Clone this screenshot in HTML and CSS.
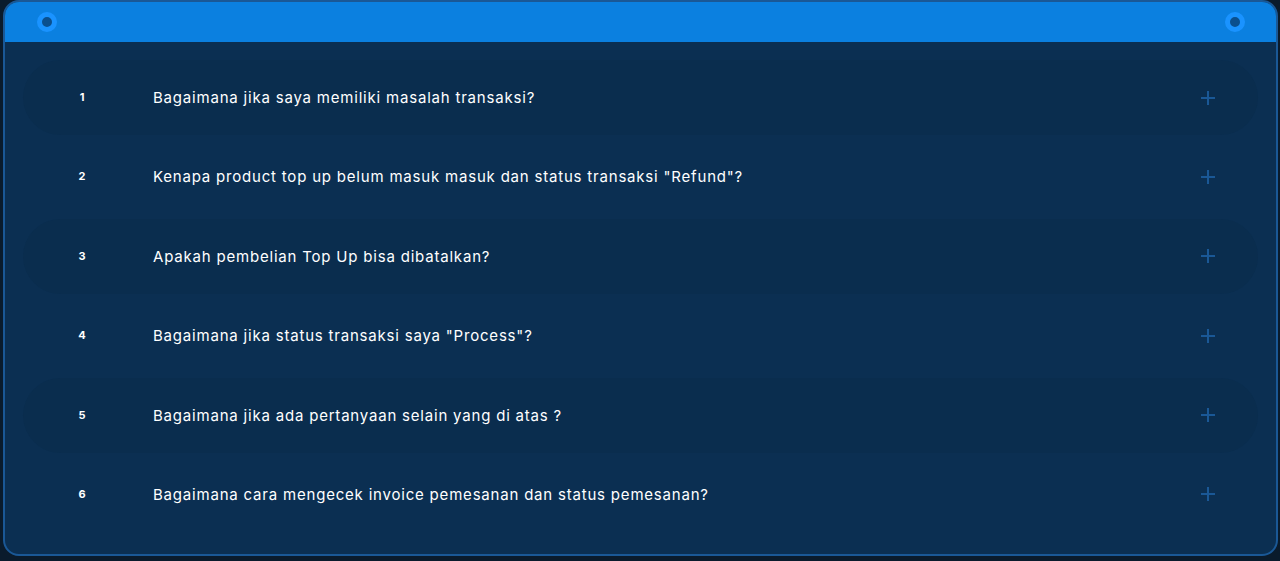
FILE: index.html
```html
<!DOCTYPE html>
<html lang="id">
<head>
<meta charset="utf-8">
<title>FAQ</title>
<link rel="stylesheet" href="styles.css">
</head>
<body>
<div class="card">
  <div class="card-head">
    <span class="dot"></span>
    <span class="dot"></span>
  </div>
  <div class="card-body">
    <div class="row shade"><span class="num">1</span><span class="q">Bagaimana jika saya memiliki masalah transaksi?</span><span class="plus"></span></div>
    <div class="row"><span class="num">2</span><span class="q">Kenapa product top up belum masuk masuk dan status transaksi "Refund"?</span><span class="plus"></span></div>
    <div class="row shade"><span class="num">3</span><span class="q">Apakah pembelian Top Up bisa dibatalkan?</span><span class="plus"></span></div>
    <div class="row"><span class="num">4</span><span class="q">Bagaimana jika status transaksi saya "Process"?</span><span class="plus"></span></div>
    <div class="row shade"><span class="num">5</span><span class="q">Bagaimana jika ada pertanyaan selain yang di atas ?</span><span class="plus"></span></div>
    <div class="row"><span class="num">6</span><span class="q">Bagaimana cara mengecek invoice pemesanan dan status pemesanan?</span><span class="plus"></span></div>
  </div>
</div>
</body>
</html>
```
FILE: styles.css
```css
* { box-sizing: border-box; }
html, body { margin: 0; padding: 0; }
body {
  background: #0a1b2c;
  font-family: "Inter", "Open Sans", sans-serif;
  width: 1280px;
  height: 561px;
  overflow: hidden;
}
.card {
  margin: 0 2px 0 3px;
  height: 556px;
  border: 2px solid #1a5896;
  border-radius: 16px;
  background: #0b2f52;
  overflow: hidden;
}
.card-head {
  height: 40px;
  background: #0b80e0;
  display: flex;
  align-items: center;
  justify-content: space-between;
  padding: 0 31px 0 32px;
}
.dot {
  width: 20px;
  height: 20px;
  border-radius: 50%;
  border: 5px solid #1a93ff;
  background: #0a4f8e;
}
.card-body {
  padding: 18px 18px 0 18px;
  display: flex;
  flex-direction: column;
  gap: 4.4px;
}
.row {
  height: 75px;
  border-radius: 38px;
  display: flex;
  align-items: center;
}
.row.shade { background: #0a2d4e; }
.num {
  width: 118px;
  text-align: center;
  color: #ffffff;
  font-size: 11px;
  font-weight: 700;
  margin-top: -1px;
}
.q {
  margin-left: 12px;
  flex: 1;
  color: #ffffff;
  font-size: 15px;
  letter-spacing: 0.8px;
}
.plus {
  position: relative;
  width: 14px;
  height: 14px;
  margin-right: 43px;
}
.plus::before, .plus::after {
  content: "";
  position: absolute;
  background: #1a5896;
}
.plus::before { left: 0; top: 6px; width: 14px; height: 2px; }
.plus::after { left: 6px; top: 0; width: 2px; height: 14px; }
```
